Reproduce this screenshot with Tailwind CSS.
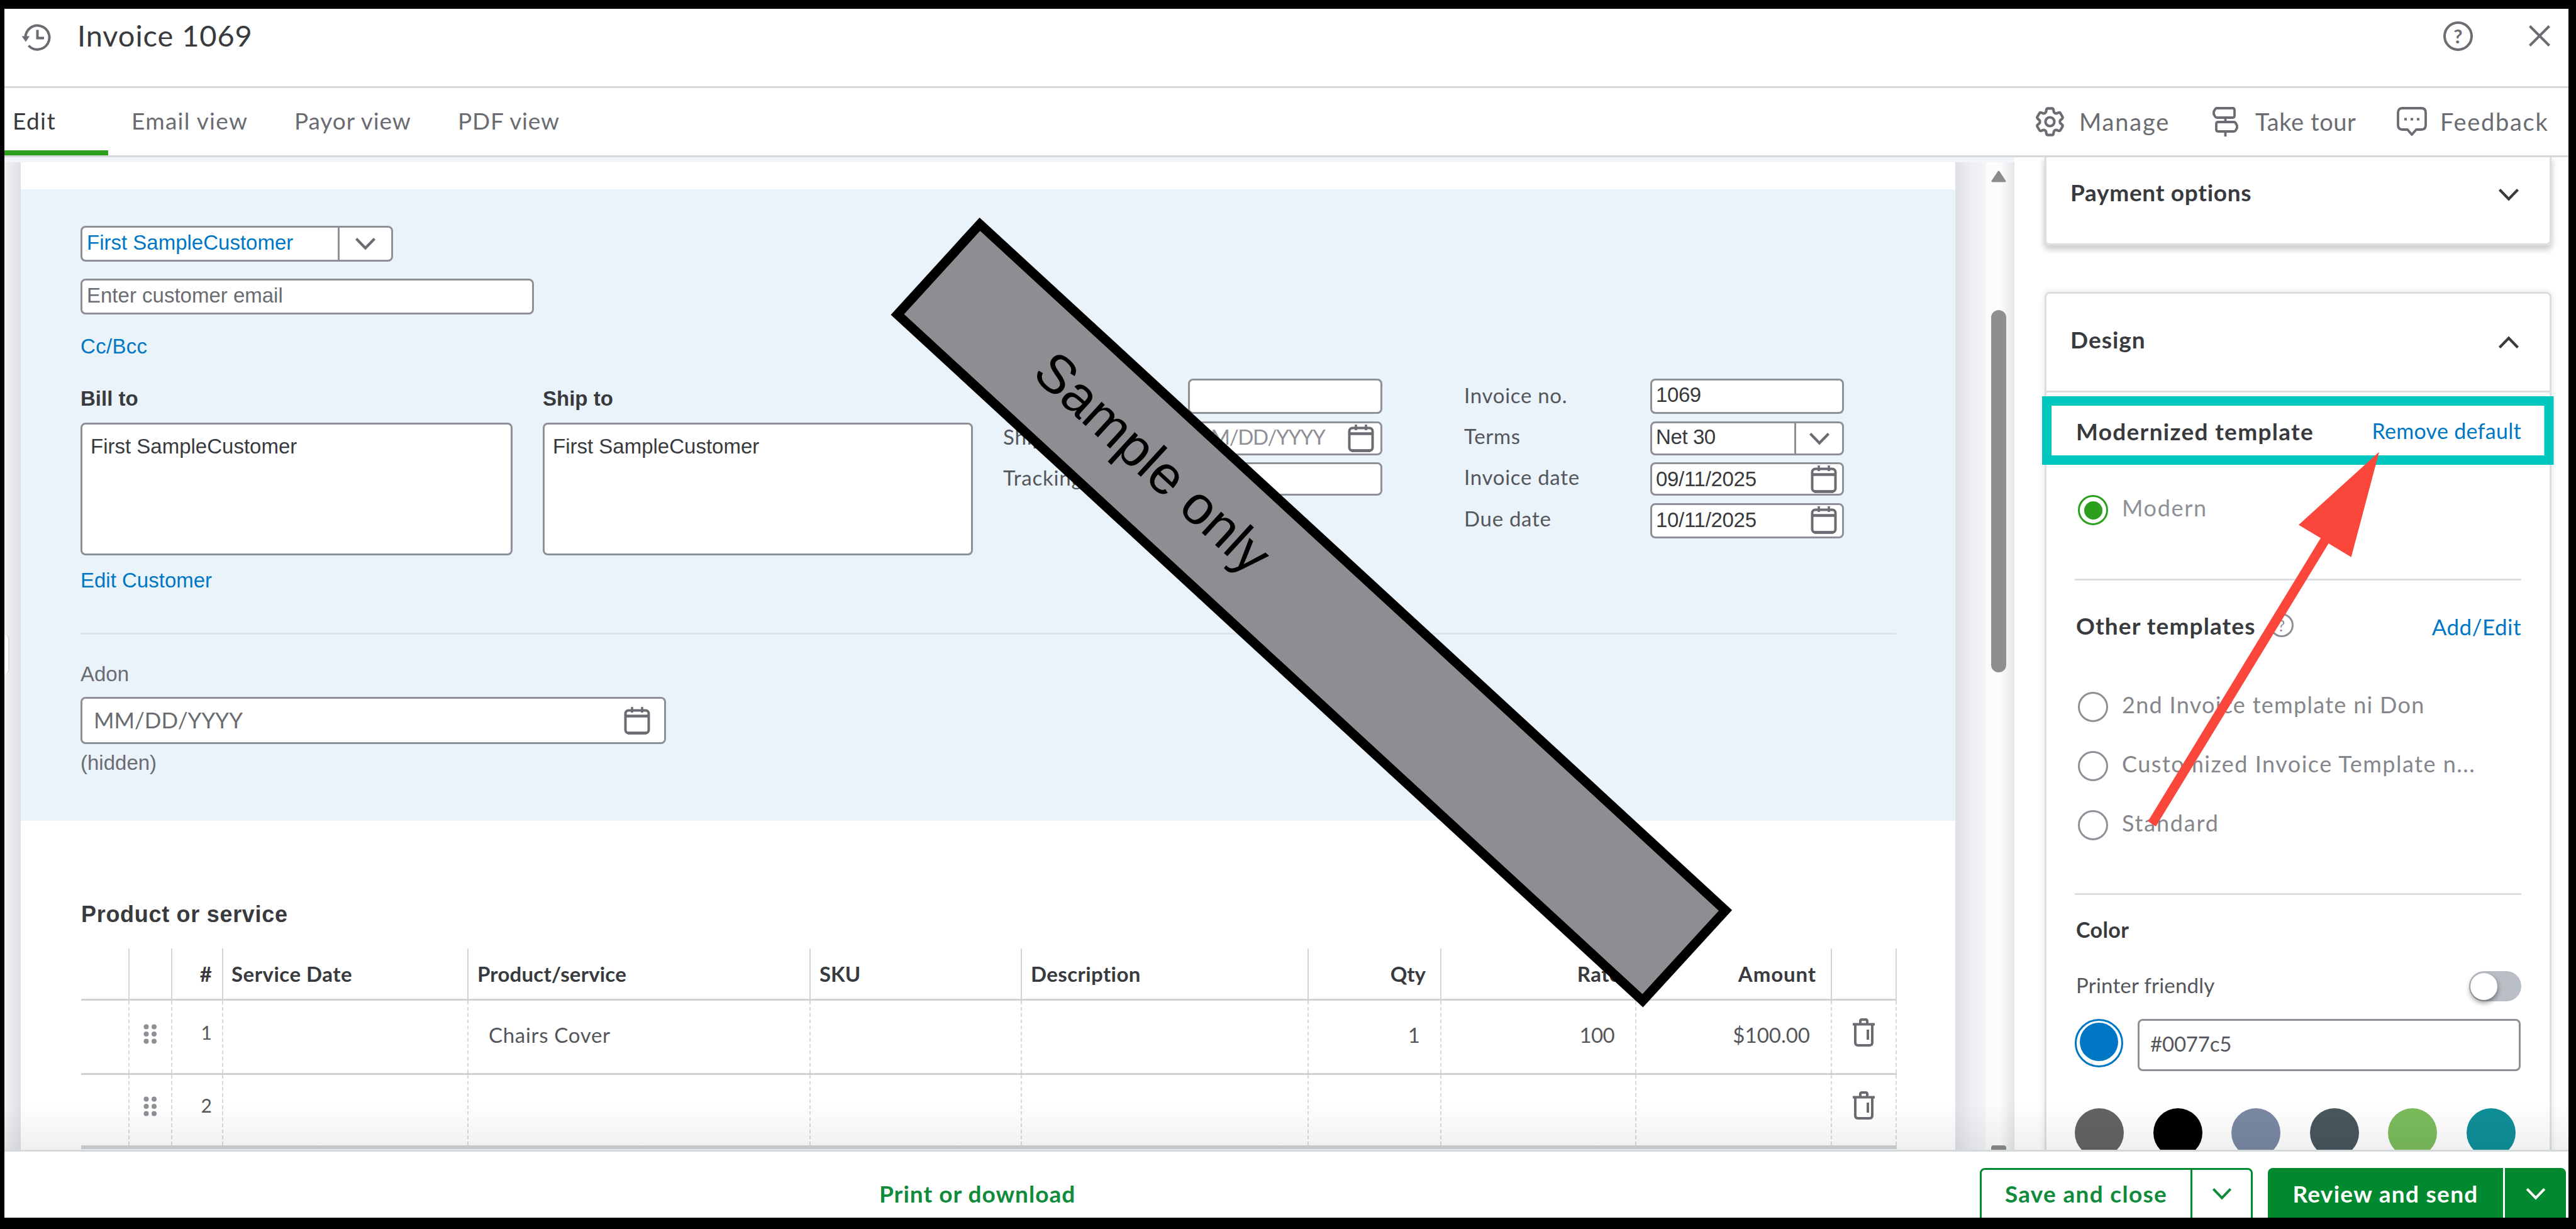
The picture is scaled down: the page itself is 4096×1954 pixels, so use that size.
<!DOCTYPE html>
<html lang="en">
<head>
  <meta charset="UTF-8" />
  <title>Invoice 1069</title>
  <meta name="viewport" content="width=device-width, initial-scale=1.0" />
  <script src="https://cdn.jsdelivr.net/npm/@tailwindcss/browser@4"></script>
</head>

<body class="relative w-[4096px] h-[1954px] overflow-hidden bg-black pl-[7px] pt-[14px] font-['Lato','Open_Sans',sans-serif] text-[#393a3d] whitespace-nowrap">

<!-- Icon sprites -->
<svg class="hidden">
  <symbol id="calendar" viewBox="0 0 42 44">
    <rect x="2.5" y="5.5" width="37" height="36" rx="5" fill="none" stroke="currentColor" stroke-width="4" />
    <path d="M3 14.5h36" stroke="currentColor" stroke-width="4.5" />
    <path d="M13 0v9M29 0v9" stroke="currentColor" stroke-width="3.5" />
    <path d="M6 41.5h30" stroke="currentColor" stroke-width="4.5" />
  </symbol>
  <symbol id="chevron" viewBox="0 0 34 21">
    <path d="M2.5 2.5L17 17.5L31.5 2.5" fill="none" stroke="currentColor" stroke-width="4.2" />
  </symbol>
  <symbol id="trash" viewBox="0 0 37 45">
    <path d="M1 9.5h35M13 9V4.5q0-2.5 2.5-2.5h6q2.500 0 2.500 2.500V9M5 10v28.500q0 4.500 4.500 4.500h18q4.500 0 4.500-4.500V10M25 18v16" fill="none" stroke="currentColor" stroke-width="4" />
  </symbol>
  <symbol id="drag" viewBox="0 0 22 32">
    <g fill="currentColor"><circle cx="4.5" cy="4.5" r="4" /><circle cx="17" cy="4.5" r="4" /><circle cx="4.5" cy="16" r="4" /><circle cx="17" cy="16" r="4" /><circle cx="4.5" cy="27.5" r="4" /><circle cx="17" cy="27.5" r="4" /></g>
  </symbol>
</svg>

<div class="w-[4077px] h-[1922px] bg-white flex flex-col overflow-hidden">

  <!-- Title bar -->
  <header class="h-[126px] shrink-0 border-b-3 border-[#d4d7dc]">
    <div class="h-[86px] flex items-center pl-[27px] pr-[29px]">
      <svg class="w-[47px] h-[43px] mt-[5px]" viewBox="0 0 47 43" fill="none" stroke="#6b6c72" stroke-width="4">
        <path d="M6.5 22A19 19 0 1 1 11.500 34.500" />
        <path d="M25.5 9.5v13h10.500" />
        <path d="M0.5 19.5h12.500l-6 9z" fill="#6b6c72" stroke="none" />
      </svg>
      <h1 class="ml-[42px] pb-[2px] text-[47px] leading-none tracking-[0.9px]">Invoice 1069</h1>
      <span class="ml-auto size-[47px] rounded-full border-4 border-[#6b6c72] text-[#6b6c72] text-[31px] font-bold leading-none flex items-center justify-center">?</span>
      <svg class="ml-[89px] w-[34px] h-[34px]" viewBox="0 0 34 34" stroke="#6b6c72" stroke-width="4"><path d="M1.500 1.500l31 31M32.500 1.500l-31 31" /></svg>
    </div>
  </header>

  <!-- Tabs -->
  <nav class="h-[110px] shrink-0 border-b-3 border-[#d4d7dc] flex items-center text-[37px] text-[#6b6c72]">
    <div class="w-[165px] h-full flex items-center pl-[13px] pb-[3px] text-[#393a3d] tracking-[1.400px] shadow-[inset_0_-8px_0_#2ca01c]">Edit</div>
    <div class="w-[259px] ml-[37px] pb-[3px] tracking-[1.300px]">Email view</div>
    <div class="w-[260px] pb-[3px] tracking-[0.900px]">Payor view</div>
    <div class="pb-[3px] tracking-[0.800px]">PDF view</div>
    <div class="ml-auto w-[282px] flex items-center text-[38px] tracking-[1.800px]">
      <svg class="size-[47px] mr-[23px]" viewBox="2 2 20 20" fill="none" stroke="currentColor" stroke-width="1.750" stroke-linejoin="round">
        <path d="M9.594 3.94c.09-.542.56-.94 1.11-.94h2.593c.55 0 1.02.398 1.11.94l.213 1.281c.063.374.313.686.645.87.074.04.147.083.22.127.325.196.72.257 1.075.124l1.217-.456a1.125 1.125 0 0 1 1.37.49l1.296 2.247a1.125 1.125 0 0 1-.26 1.431l-1.003.827c-.293.241-.438.613-.43.992a7.723 7.723 0 0 1 0 .255c-.008.378.137.75.43.991l1.004.827c.424.35.534.955.26 1.43l-1.298 2.247a1.125 1.125 0 0 1-1.369.491l-1.217-.456c-.355-.133-.75-.072-1.076.124a6.47 6.47 0 0 1-.22.128c-.331.183-.581.495-.644.869l-.213 1.281c-.09.543-.56.94-1.11.94h-2.594c-.55 0-1.019-.398-1.11-.94l-.213-1.281c-.062-.374-.312-.686-.644-.87a6.52 6.52 0 0 1-.22-.127c-.325-.196-.72-.257-1.076-.124l-1.217.456a1.125 1.125 0 0 1-1.369-.49l-1.297-2.247a1.125 1.125 0 0 1 .26-1.431l1.004-.827c.292-.24.437-.613.43-.991a6.932 6.932 0 0 1 0-.255c.007-.38-.138-.751-.43-.992l-1.004-.827a1.125 1.125 0 0 1-.26-1.43l1.297-2.247a1.125 1.125 0 0 1 1.37-.491l1.216.456c.356.133.751.072 1.076-.124.072-.044.146-.086.22-.128.332-.183.582-.495.644-.869l.214-1.28Z" />
        <circle cx="12" cy="12" r="3" />
      </svg>
      Manage
    </div>
    <div class="w-[293px] flex items-center text-[38px] tracking-[0.600px]">
      <svg class="w-[41px] h-[47px] mr-[27px]" viewBox="0 0 41 47" fill="none" stroke="currentColor" stroke-width="3.800" stroke-linejoin="round">
        <path d="M7 2h25q3 0 3 3v9q0 3-3 3H7q-2 0-3-2l-2-3.500v-4L4 4q1-2 3-2z" />
        <path d="M34 24H9q-3 0-3 3v9q0 3 3 3h25q2 0 3-2l2-3.500v-4L37 26q-1-2-3-2zM20.500 17v7M20.500 39v8" />
      </svg>
      Take tour
    </div>
    <div class="w-[273px] flex items-center text-[38px] tracking-[1.700px]">
      <svg class="w-[48px] h-[47px] mr-[21px]" viewBox="0 0 48 47" fill="none" stroke="currentColor" stroke-width="3.800" stroke-linejoin="round">
        <path d="M9 2h30q7 0 7 7v20q0 7-7 7h-8l-7 8-7-8H9q-7 0-7-7V9q0-7 7-7z" />
        <path d="M12 19.500h4M22 19.500h4M32 19.500h4" stroke-linejoin="miter" />
      </svg>
      Feedback
    </div>
  </nav>

  <main class="relative h-[1578px] shrink-0 flex overflow-hidden">
    <!-- Invoice form -->
    <section class="w-[3196px] shrink-0 pt-[8px] bg-[#f4f5f8] flex">
      <div class="relative w-[26px] shrink-0 bg-linear-to-r from-[#f1f1f5] to-[#e0e1e6]">
        <div class="absolute left-0 top-[751px] w-[8px] h-[63px] bg-white border-r-2 border-[#d4d7dc] rounded-r-lg"></div>
      </div>

      <div class="w-[3076px] shrink-0 bg-white">
        <div class="h-[43px]"></div>
        <div class="h-[1004px] bg-[#ebf3fa] pl-[95px] pt-[58px] font-['Liberation_Sans',sans-serif] text-[33px]">
          <div class="w-[497px] h-[57px] flex items-center border-3 border-[#8d9096] rounded-lg bg-white text-[#0077c5]">
            <div class="w-[409px] h-full pl-[7px] border-r-3 border-[#8d9096] flex items-center pb-1">First SampleCustomer</div>
            <svg class="mx-auto w-[34px] h-[21px] text-[#6b6c72]"><use href="#chevron" /></svg>
          </div>
          <div class="mt-[27px] w-[721px] h-[57px] flex items-center pl-[7px] pb-1 border-3 border-[#8d9096] rounded-lg bg-white text-[#6b6c72]">Enter customer email</div>
          <div class="mt-[31px] h-[40px] leading-[40px] text-[#0077c5] tracking-[0.300px]">Cc/Bcc</div>

          <div class="mt-[31px] flex">
            <div class="w-[687px]">
              <div class="h-[63px] leading-[63px] font-bold">Bill to</div>
              <div class="mt-[7px] h-[211px] border-3 border-[#8d9096] rounded-lg bg-white px-[13px] pt-[16px] leading-[38px]">First SampleCustomer</div>
              <div class="mt-[20px] h-[40px] leading-[40px] text-[#0077c5]">Edit Customer</div>
            </div>
            <div class="ml-[48px] w-[684px]">
              <div class="h-[63px] leading-[63px] font-bold">Ship to</div>
              <div class="mt-[7px] h-[211px] border-3 border-[#8d9096] rounded-lg bg-white px-[13px] pt-[16px] leading-[38px]">First SampleCustomer</div>
            </div>

            <!-- Shipping fields -->
            <div class="ml-[48px] w-[603px] text-[#55565b]">
              <div class="h-[56px] flex items-center">
                <span class="w-[294px] font-['Lato',sans-serif] tracking-[0.8px]">Ship via</span>
                <div class="w-[309px] h-full border-3 border-[#8d9096] rounded-lg bg-white"></div>
              </div>
              <div class="mt-[12px] h-[54px] flex items-center">
                <span class="w-[294px] pb-1 font-['Lato',sans-serif] tracking-[0.8px]">Ship date</span>
                <div class="w-[309px] h-full border-3 border-[#8d9096] rounded-lg bg-white flex items-center text-[#8d9096] pl-[4px] pr-[10px] font-['Lato',sans-serif] tracking-[-1.3px]"><span class="pb-1">MM/DD/YYYY</span><svg class="ml-auto w-[42px] h-[44px] text-[#6b6c72]"><use href="#calendar" /></svg></div>
              </div>
              <div class="mt-[11px] h-[53px] flex items-center">
                <span class="w-[294px] pb-1 font-['Lato',sans-serif] tracking-[0.8px]">Tracking no.</span>
                <div class="w-[309px] h-full border-3 border-[#8d9096] rounded-lg bg-white"></div>
              </div>
            </div>

            <!-- Invoice fields -->
            <div class="ml-[130px] w-[604px]">
              <div class="h-[56px] flex items-center">
                <span class="w-[296px] pb-[3px] font-['Lato',sans-serif] text-[#55565b] tracking-[0.7px]">Invoice no.</span>
                <div class="w-[308px] h-full border-3 border-[#8d9096] rounded-lg bg-white flex items-center pl-[6px] pb-1 tracking-[-0.4px]">1069</div>
              </div>
              <div class="mt-[12px] h-[54px] flex items-center">
                <span class="w-[296px] pb-[6px] font-['Lato',sans-serif] text-[#55565b] tracking-[0.7px]">Terms</span>
                <div class="w-[308px] h-full border-3 border-[#8d9096] rounded-lg bg-white flex items-center pl-[6px]">
                  <span class="w-[223px] h-full border-r-3 border-[#8d9096] flex items-center pb-[5px] tracking-[-0.4px]">Net 30</span>
                  <svg class="mx-auto w-[34px] h-[21px] text-[#6b6c72]"><use href="#chevron" /></svg>
                </div>
              </div>
              <div class="mt-[11px] h-[53px] flex items-center">
                <span class="w-[296px] pb-[5px] font-['Lato',sans-serif] text-[#55565b] tracking-[0.7px]">Invoice date</span>
                <div class="w-[308px] h-full border-3 border-[#8d9096] rounded-lg bg-white flex items-center pl-[6px] pr-[8px] tracking-[-0.3px]">09/11/2025<svg class="ml-auto w-[42px] h-[44px] text-[#6b6c72]"><use href="#calendar" /></svg></div>
              </div>
              <div class="mt-[12px] h-[56px] flex items-center">
                <span class="w-[296px] pb-[7px] font-['Lato',sans-serif] text-[#55565b] tracking-[0.7px]">Due date</span>
                <div class="w-[308px] h-full border-3 border-[#8d9096] rounded-lg bg-white flex items-center pl-[6px] pr-[8px] pb-[3px] tracking-[-0.3px]">10/11/2025<svg class="ml-auto w-[42px] h-[44px] text-[#6b6c72]"><use href="#calendar" /></svg></div>
              </div>
            </div>
          </div>

          <div class="mt-[63px] w-[2887px] h-[3px] bg-[#dfe2e6]"></div>
          <div class="mt-[43px] h-[40px] leading-[40px] text-[#6b6c72]">Adon</div>
          <div class="mt-[16px] w-[931px] h-[75px] flex items-center pl-[18px] pr-[22px] border-3 border-[#8d9096] rounded-lg bg-white text-[#6b6c72] font-['Lato',sans-serif] text-[35px]"><span class="pb-[3px]">MM/DD/YYYY</span><svg class="ml-auto w-[42px] h-[44px]"><use href="#calendar" /></svg></div>
          <div class="mt-[10px] h-[40px] leading-[40px] text-[#6b6c72]">(hidden)</div>
        </div>

        <!-- Line items -->
        <div class="pl-[96px]">
          <h2 class="mt-[124px] h-[50px] leading-[50px] text-[36px] font-bold font-['Liberation_Sans',sans-serif] tracking-[0.7px]">Product or service</h2>
          <div class="mt-[29px] w-[2887px]">
            <div class="h-[83px] border-b-3 border-[#d0d2d6] grid grid-cols-[77px_68px_81px_390px_544px_336px_456px_211px_310px_311px_103px] text-[33px] font-bold leading-[80px] *:border-r-2 *:border-[#d4d5da]">
              <div></div>
              <div></div>
              <div class="text-right pr-[16px]">#</div>
              <div class="pl-[13px] tracking-[0.500px]">Service Date</div>
              <div class="pl-[14px] tracking-[0.200px]">Product/service</div>
              <div class="pl-[14px]">SKU</div>
              <div class="pl-[14px] tracking-[0.400px]">Description</div>
              <div class="text-right pr-[23px]">Qty</div>
              <div class="text-right pr-[23px] tracking-[0.500px]">Rate</div>
              <div class="text-right pr-[23px] tracking-[0.900px]">Amount</div>
              <div></div>
            </div>
            <div class="h-[118px] border-b-3 border-[#d0d2d6] grid grid-cols-[77px_68px_81px_390px_544px_336px_456px_211px_310px_311px_103px] text-[33px] leading-[109px] text-[#55565b] *:border-r-2 *:border-dashed *:border-[#d8d9dd]">
              <div></div>
              <div class="flex items-center justify-center pb-[10px]"><svg class="w-[22px] h-[32px] text-[#8d9096]"><use href="#drag" /></svg></div>
              <div class="text-right pr-[16px] leading-[101px] text-[30px]">1</div>
              <div></div>
              <div class="pl-[32px] tracking-[0.700px]">Chairs Cover</div>
              <div></div>
              <div></div>
              <div class="text-right pr-[32px]">1</div>
              <div class="text-right pr-[33px] tracking-[-0.600px]">100</div>
              <div class="text-right pr-[33px]">$100.00</div>
              <div class="flex items-center justify-center pb-[14px]"><svg class="w-[37px] h-[45px] text-[#6b6c72]"><use href="#trash" /></svg></div>
            </div>
            <div class="h-[112px] grid grid-cols-[77px_68px_81px_390px_544px_336px_456px_211px_310px_311px_103px] leading-[96px] text-[30px] text-[#55565b] *:border-r-2 *:border-dashed *:border-[#d8d9dd]">
              <div></div>
              <div class="flex items-center justify-center pb-[12px]"><svg class="w-[22px] h-[32px] text-[#8d9096]"><use href="#drag" /></svg></div>
              <div class="text-right pr-[16px]">2</div>
              <div></div>
              <div></div>
              <div></div>
              <div></div>
              <div></div>
              <div></div>
              <div></div>
              <div class="flex items-center justify-center pb-[16px]"><svg class="w-[37px] h-[45px] text-[#6b6c72]"><use href="#trash" /></svg></div>
            </div>
            <div class="h-[6px] bg-[#d0d2d6]"></div>
          </div>
        </div>
      </div>

      <div class="w-[49px] shrink-0 bg-linear-to-r from-[#dfe1e6] via-[#eceef3] to-[#f4f5f9]"></div>
      <!-- Scrollbar -->
      <div class="w-[45px] shrink-0 pl-[8px] bg-linear-to-r from-[#fcfcfc] from-50% to-[#e4e5e9]">
        <svg class="mt-[13px] w-[24px] h-[19px]" viewBox="0 0 24 19"><path d="M12 2L22 17H2z" fill="#8b8b8b" stroke="#8b8b8b" stroke-width="3" stroke-linejoin="round" /></svg>
        <div class="mt-[203px] w-[24px] h-[576px] rounded-full bg-[#8f8f8f]"></div>
        <div class="mt-[752px] w-[24px] h-[8px] rounded-t-sm bg-[#8b8b8b]"></div>
      </div>
    </section>

    <!-- Settings panel -->
    <aside class="w-[881px] shrink-0 pl-[48px] bg-white">
      <div class="w-[806px] h-[140px] pl-[38px] pr-[48px] border-3 border-t-0 border-[#dcdee3] rounded-b-lg shadow-[0_6px_8px_2px_rgba(0,0,0,0.18)]">
        <div class="h-[116px] flex items-center justify-between text-[37px] font-bold">
          <span class="pb-[4px] tracking-[0.700px]">Payment options</span>
          <svg class="w-[34px] h-[21px] mt-[3px]"><use href="#chevron" /></svg>
        </div>
      </div>

      <div class="mt-[74px] w-[806px] h-[1500px] border-3 border-[#dcdee3] rounded-lg shadow-[0_0_8px_2px_rgba(0,0,0,0.08)]">
        <div class="h-[157px] pl-[38px] pr-[48px] pb-[5px] border-b-3 border-[#dcdcde] flex items-center justify-between text-[37px] font-bold">
          <span class="pb-[4px] tracking-[1px]">Design</span>
          <svg class="w-[34px] h-[21px] mt-[6px] rotate-180"><use href="#chevron" /></svg>
        </div>
        <div class="pl-[47px] pr-[45px] text-[36px]">
          <div class="h-[127px] flex items-center justify-between">
            <span class="text-[37px] font-bold tracking-[1.300px] pb-[4px]">Modernized template</span>
            <span class="text-[34px] text-[#0077c5] tracking-[0.300px] pb-[7px]">Remove default</span>
          </div>
          <div class="mt-[36px] pl-[3px] h-[48px] flex items-center text-[#8d9096]">
            <span class="size-[48px] rounded-full border-3 border-[#2ca01c] flex items-center justify-center"><span class="size-[29px] rounded-full bg-[#2ca01c]"></span></span>
            <span class="ml-[22px] pb-[9px] tracking-[1.700px]">Modern</span>
          </div>
          <div class="-ml-[2px] mt-[85px] h-[3px] bg-[#dcdde3]"></div>
          <div class="mt-[50px] h-[48px] flex items-center">
            <span class="text-[37px] font-bold tracking-[1.100px] pb-[4px]">Other templates</span>
            <span class="ml-[22px] mb-[6px] size-[38px] rounded-full border-3 border-[#8d9096] text-[#8d9096] text-[25px] leading-none flex items-center justify-center">?</span>
            <span class="ml-auto pb-[2px] text-[35px] text-[#0077c5] tracking-[0.500px]">Add/Edit</span>
          </div>
          <div class="mt-[79px] pl-[3px] flex flex-col gap-[46px] text-[#85868c]">
            <div class="h-[48px] flex items-center"><span class="size-[48px] rounded-full border-3 border-[#8d9096]"></span><span class="ml-[22px] pb-[8px] tracking-[1.300px]">2nd Invoice template ni Don</span></div>
            <div class="h-[48px] flex items-center"><span class="size-[48px] rounded-full border-3 border-[#8d9096]"></span><span class="ml-[22px] pb-[8px] tracking-[1.500px]">Customized Invoice Template n...</span></div>
            <div class="h-[48px] flex items-center"><span class="size-[48px] rounded-full border-3 border-[#8d9096]"></span><span class="ml-[22px] pb-[8px] tracking-[1.800px]">Standard</span></div>
          </div>
          <div class="-ml-[2px] mt-[84px] h-[3px] bg-[#dcdde3]"></div>
          <div class="mt-[35px] h-[40px] leading-[40px] text-[34px] font-bold tracking-[0.400px]">Color</div>
          <div class="mt-[46px] h-[48px] flex items-center justify-between text-[33px] text-[#55565b]">
            <span class="pb-[3px] tracking-[0.2px]">Printer friendly</span>
            <span class="w-[83px] h-[48px] rounded-full bg-[#babec5] flex items-center pl-[2px]"><span class="size-[43px] rounded-full bg-white shadow-[0_4px_8px_rgba(0,0,0,0.45)]"></span></span>
          </div>
          <div class="-ml-[2px] mt-[28px] h-[83px] flex items-start">
            <span class="size-[77px] rounded-full border-3 border-[#0077c5] flex items-center justify-center pb-[5px]"><span class="size-[61px] rounded-full bg-[#0077c5]"></span></span>
            <span class="ml-[23px] w-[609px] h-[83px] border-3 border-[#8d9096] rounded-lg flex items-center pl-[17px] pb-[3px] text-[33px] text-[#55565b] tracking-[-0.2px]">#0077c5</span>
          </div>
          <div class="-ml-[2px] mt-[59px] flex gap-[46.5px] *:size-[78px] *:shrink-0 *:rounded-full">
            <span class="bg-[#636363]"></span>
            <span class="bg-black"></span>
            <span class="bg-[#7a88a4]"></span>
            <span class="bg-[#49565e]"></span>
            <span class="bg-[#7bbc5c]"></span>
            <span class="bg-[#0f8f99]"></span>
          </div>
        </div>
      </div>
    </aside>
    <div class="absolute inset-x-0 bottom-0 h-[76px] bg-linear-to-t from-black/6 to-transparent"></div>
  </main>

  <!-- Footer actions -->
  <footer class="h-[108px] shrink-0 border-t-3 border-[#d4d9dc] flex items-start pt-[26px] pl-[1391px] pr-[4px] overflow-hidden text-[37px] font-bold">
    <div class="h-[82px] leading-[82px] text-[#108b3c] tracking-[1px]">Print or download</div>
    <div class="ml-auto w-[434px] h-[86px] border-3 border-[#00892e] rounded-lg text-[#108b3c] flex items-center">
      <div class="w-[335px] h-full border-r-3 border-[#00892e] flex items-center justify-center pb-[4px] tracking-[1.300px]">Save and close</div>
      <svg class="mx-auto w-[32px] h-[20px] mb-[4px]"><use href="#chevron" /></svg>
    </div>
    <div class="ml-[24px] w-[474px] h-[86px] rounded-lg bg-[#00892e] text-white flex items-center">
      <div class="w-[377px] h-full border-r-3 border-white flex items-center justify-center pb-[4px] tracking-[1.300px]">Review and send</div>
      <svg class="mx-auto w-[34px] h-[20px] mb-[4px]"><use href="#chevron" /></svg>
    </div>
  </footer>
</div>

<!-- Annotations -->
<svg class="absolute inset-0 w-[4096px] h-[1954px]" viewBox="0 0 4096 1954">
  <polygon points="1558,356.5 2743.5,1447.5 2612,1591 1427,500" fill="#8e8d92" stroke="#000" stroke-width="15" />
  <text transform="translate(1639 597) rotate(42.6)" font-family="Liberation Sans, sans-serif" font-size="86">Sample only</text>
  <rect x="3254.5" y="637.5" width="798.5" height="94" fill="none" stroke="#00c7be" stroke-width="15" />
  <path d="M3783 718.4L3738.6 885.8L3702.6 864L3427.9 1314L3415.4 1305.8L3690 855.4L3655 834.4z" fill="#fb463c" />
</svg>

</body>
</html>
